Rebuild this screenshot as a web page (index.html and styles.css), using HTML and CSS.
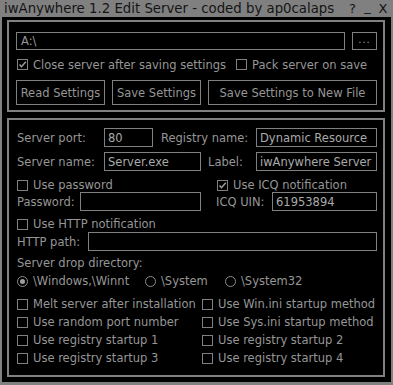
FILE: index.html
```html
<!DOCTYPE html>
<html>
<head>
<meta charset="utf-8">
<link rel="stylesheet" href="styles.css">
</head>
<body>
<div class="window">
  <div class="titlebar">
    <span class="title">iwAnywhere 1.2 Edit Server - coded by ap0calaps</span>
    <span class="tb-btn tb-help">?</span>
    <span class="tb-btn tb-min">_</span>
    <span class="tb-btn tb-close">X</span>
  </div>
  <div class="frame">
    <div class="panel panel-top">
      <div class="path-row">
        <div class="field path-field">A:\</div>
        <div class="btn browse-btn">...</div>
      </div>
      <div class="check-row top-checks">
        <label class="check close-check"><span class="cb checked"><svg width="9" height="9" viewBox="0 0 9 9"><path d="M1.5 4.5 L3.5 6.8 L7.8 1.8" fill="none" stroke="#a0a0a0" stroke-width="1.4"/></svg></span>Close server after saving settings</label>
        <label class="check pack-check"><span class="cb"></span>Pack server on save</label>
      </div>
      <div class="btn-row">
        <div class="btn btn-read">Read Settings</div>
        <div class="btn btn-save">Save Settings</div>
        <div class="btn btn-new">Save Settings to New File</div>
      </div>
    </div>
    <div class="panel panel-bottom">
      <div class="row row-1">
        <span class="lbl lbl-port">Server port:</span>
        <div class="field f-port">80</div>
        <span class="lbl lbl-reg">Registry name:</span>
        <div class="field f-reg">Dynamic Resource</div>
      </div>
      <div class="row row-2">
        <span class="lbl lbl-name">Server name:</span>
        <div class="field f-name">Server.exe</div>
        <span class="lbl lbl-label">Label:</span>
        <div class="field f-label">iwAnywhere Server</div>
      </div>
      <div class="row row-3">
        <label class="check pw-check"><span class="cb"></span>Use password</label>
        <label class="check icq-check"><span class="cb checked"><svg width="9" height="9" viewBox="0 0 9 9"><path d="M1.5 4.5 L3.5 6.8 L7.8 1.8" fill="none" stroke="#a0a0a0" stroke-width="1.4"/></svg></span>Use ICQ notification</label>
      </div>
      <div class="row row-4">
        <span class="lbl lbl-pw">Password:</span>
        <div class="field f-pw"></div>
        <span class="lbl lbl-uin">ICQ UIN:</span>
        <div class="field f-uin">61953894</div>
      </div>
      <div class="row row-5">
        <label class="check"><span class="cb"></span>Use HTTP notification</label>
      </div>
      <div class="row row-6">
        <span class="lbl lbl-http">HTTP path:</span>
        <div class="field f-http"></div>
      </div>
      <div class="row row-7">
        <span class="lbl">Server drop directory:</span>
      </div>
      <div class="row row-8">
        <label class="radio r-win"><span class="rb selected"></span>\Windows,\Winnt</label>
        <label class="radio r-sys"><span class="rb"></span>\System</label>
        <label class="radio r-sys32"><span class="rb"></span>\System32</label>
      </div>
      <div class="check-grid">
        <label class="check"><span class="cb"></span>Melt server after installation</label>
        <label class="check"><span class="cb"></span>Use Win.ini startup method</label>
        <label class="check"><span class="cb"></span>Use random port number</label>
        <label class="check"><span class="cb"></span>Use Sys.ini startup method</label>
        <label class="check"><span class="cb"></span>Use registry startup 1</label>
        <label class="check"><span class="cb"></span>Use registry startup 2</label>
        <label class="check"><span class="cb"></span>Use registry startup 3</label>
        <label class="check"><span class="cb"></span>Use registry startup 4</label>
      </div>
    </div>
  </div>
</div>
</body>
</html>
```
FILE: styles.css
```css
html, body {
  margin: 0;
  padding: 0;
  background: #000;
}

.window {
  width: 393px;
  height: 385px;
  display: flex;
  flex-direction: column;
  background: #000;
  font-family: "DejaVu Sans", Verdana, sans-serif;
  font-size: 11.5px;
  color: #969696;
}

.titlebar {
  height: 17px;
  flex: none;
  background: #808080;
  display: flex;
  align-items: center;
  padding-left: 4px;
  color: #141414;
  font-size: 13.3px;
  line-height: 17px;
}

.title {
  flex: none;
  width: 344px;
  white-space: nowrap;
}

.tb-btn {
  flex: none;
  text-align: center;
  font-size: 13px;
}

.tb-help { width: 9px; }
.tb-min { width: 9px; margin-left: 6px; position: relative; top: -2px; }
.tb-close { width: 10px; margin-left: 6px; }

.frame {
  flex: 1;
  box-sizing: border-box;
  border: solid #808080;
  border-width: 0 2px 3px 2px;
  padding: 3px 6px 5px 5px;
  display: flex;
  flex-direction: column;
}

.panel {
  box-sizing: border-box;
  border: 2px solid #808080;
  flex: none;
}

.panel-top {
  height: 92px;
  padding: 10px 6px 0 7px;
}

.panel-bottom {
  height: 259px;
  margin-top: 6px;
  padding: 8px 6px 0 8px;
}

.field {
  box-sizing: border-box;
  border: 1px solid #808080;
  background: #000;
  color: #aaaaaa;
  padding-left: 3px;
  white-space: nowrap;
  overflow: hidden;
  display: flex;
  align-items: center;
}

.btn {
  box-sizing: border-box;
  border: 1px solid #808080;
  display: flex;
  align-items: center;
  justify-content: center;
  white-space: nowrap;
  color: #969696;
}

.path-row {
  display: flex;
  height: 18px;
  gap: 7px;
}

.path-field {
  flex: 1;
  padding-left: 4px;
  color: #969696;
}

.browse-btn {
  width: 25px;
  align-items: flex-end;
  padding-bottom: 4px;
  font-size: 10px;
  letter-spacing: 1px;
}

.check, .radio {
  display: flex;
  align-items: center;
  white-space: nowrap;
}

.cb {
  box-sizing: border-box;
  width: 11px;
  height: 11px;
  border: 1px solid #808080;
  margin-right: 5px;
  flex: none;
  display: flex;
  align-items: center;
  justify-content: center;
}

.rb {
  box-sizing: border-box;
  width: 11px;
  height: 11px;
  border: 1px solid #8c8c8c;
  border-radius: 50%;
  margin-right: 5px;
  flex: none;
  display: flex;
  align-items: center;
  justify-content: center;
}

.rb.selected::after {
  content: "";
  width: 5px;
  height: 5px;
  border-radius: 50%;
  background: #a0a0a0;
}

.check-row {
  display: flex;
  height: 13px;
}

.top-checks {
  margin-top: 8px;
  padding-left: 1px;
}

.pack-check {
  margin-left: 10px;
}

.btn-row {
  display: flex;
  gap: 7px;
  height: 25px;
  margin-top: 9px;
}

.btn-read, .btn-save { width: 89px; }
.btn-new { width: 169px; }

.row {
  display: flex;
  align-items: center;
}

.row-1 { height: 19px; }
.row-2 { height: 19px; margin-top: 5px; }
.row-3 { height: 14px; margin-top: 7px; }
.row-4 { height: 19px; }
.row-5 { height: 14px; margin-top: 6px; }
.row-6 { height: 19px; margin-top: 1px; }
.row-7 { height: 14px; margin-top: 5px; }
.row-8 { height: 14px; margin-top: 4px; }

.row .field { height: 19px; }

.lbl { white-space: nowrap; flex: none; }

.lbl-port, .lbl-name { width: 87px; }
.f-port { width: 49px; }
.lbl-reg { width: 95px; margin-left: 8px; }
.f-reg { width: 121px; }

.f-name { width: 97px; }
.lbl-label { width: 48px; margin-left: 7px; }
.f-label { width: 121px; }

.pw-check { width: 200px; }

.lbl-pw { width: 63px; }
.f-pw { width: 121px; }
.lbl-uin { width: 56px; margin-left: 15px; }
.f-uin { width: 105px; }

.lbl-http { width: 71px; }
.f-http { width: 289px; }

.r-win { width: 128px; }
.r-sys { width: 80px; }

.check-grid {
  display: grid;
  grid-template-columns: 185px 1fr;
  grid-auto-rows: 18px;
  margin-top: 7px;
  align-items: center;
}
```
